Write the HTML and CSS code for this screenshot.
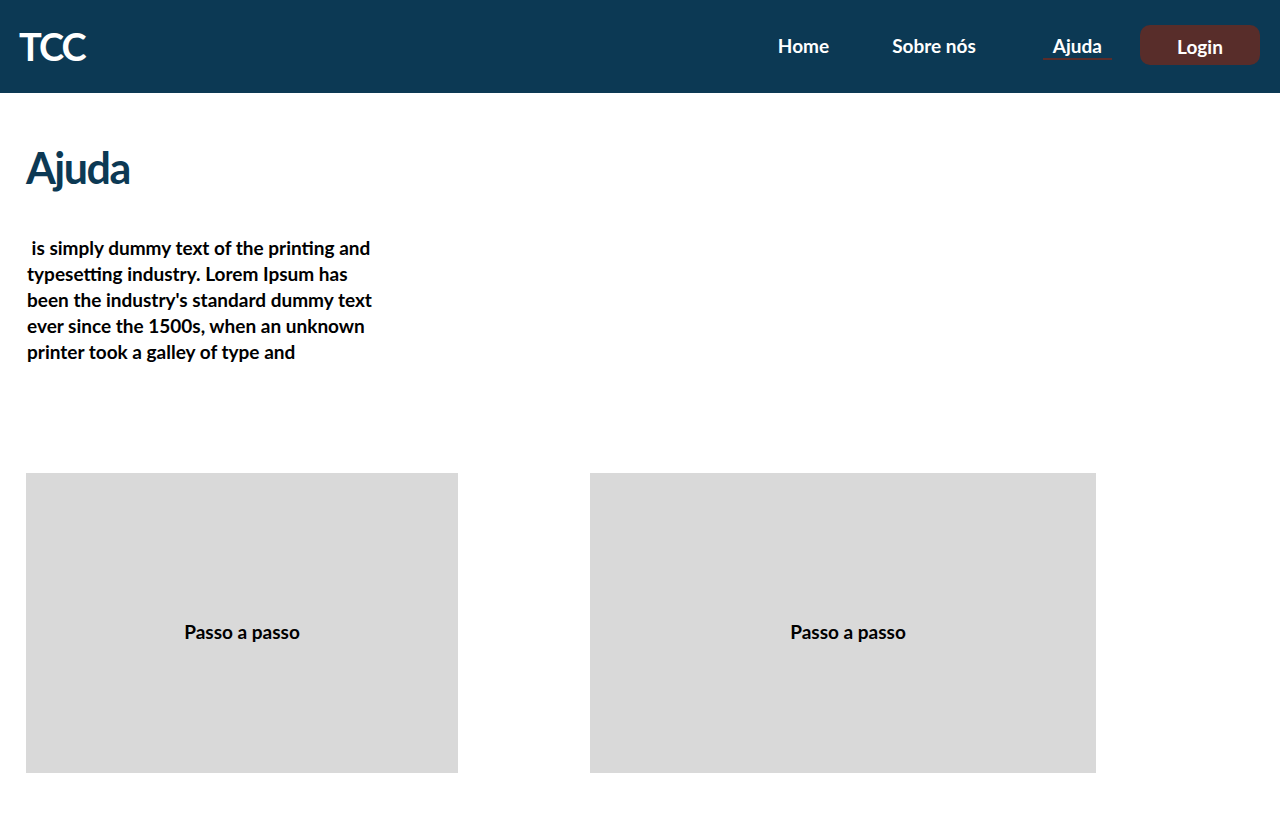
FILE: index.html
```html
<!DOCTYPE html>
<html lang="pt-BR">
<head>
<meta charset="utf-8">
<title>Ajuda - TCC</title>
<link rel="stylesheet" href="styles.css">
</head>
<body>
<header class="topbar">
  <div class="logo">TCC</div>
  <nav class="nav">
    <a class="nav-link nav-home" href="#">Home</a>
    <a class="nav-link nav-sobre" href="#">Sobre nós</a>
    <a class="nav-link nav-ajuda active" href="#">Ajuda</a>
    <a class="login-btn" href="#">Login</a>
  </nav>
</header>
<main class="content">
  <h1 class="title">Ajuda</h1>
  <p class="intro">&nbsp;is simply dummy text of the printing and typesetting industry. Lorem Ipsum has been the industry's standard dummy text ever since the 1500s, when an unknown printer took a galley of type and</p>
  <section class="cards">
    <div class="card card-a">Passo a passo</div>
    <div class="card card-b">Passo a passo</div>
  </section>
</main>
</body>
</html>
```
FILE: styles.css
```css
* { box-sizing: border-box; }
html, body { margin: 0; padding: 0; }
body {
  font-family: "Lato", "Open Sans", sans-serif;
  font-weight: 700;
  background: #ffffff;
  color: #000000;
  width: 1280px;
}
a { text-decoration: none; color: inherit; }

.topbar {
  height: 93px;
  background: #0c3954;
  display: flex;
  align-items: center;
  justify-content: space-between;
  padding: 0 20px 0 19px;
}
.logo {
  color: #ffffff;
  font-size: 38px;
  font-weight: 700;
  letter-spacing: -2px;
  margin-top: -1px;
}
.nav {
  display: flex;
  align-items: center;
}
.nav-link {
  color: #ffffff;
  font-size: 19px;
  padding: 0 10px 0;
  line-height: 24px;
  margin-top: 0;
  border-bottom: 2px solid transparent;
}
.nav-home { margin-right: 43px; }
.nav-sobre { margin-right: 57px; }
.nav-ajuda { margin-right: 28px; }
.nav-link.active { border-bottom-color: #5a2d2b; }
.login-btn {
  width: 120px;
  height: 40px;
  border-radius: 10px;
  background: #582d2a;
  color: #ffffff;
  font-size: 19px;
  display: flex;
  align-items: center;
  justify-content: center;
  padding-top: 3px;
  margin-top: -4px;
}

.content {
  padding: 0 26px;
}
.title {
  margin: 48px 0 0;
  font-size: 43px;
  line-height: 54px;
  color: #0c3954;
  font-weight: 700;
  letter-spacing: -1.5px;
}
.intro {
  margin: 40px 0 0 1px;
  width: 360px;
  font-size: 19px;
  line-height: 26px;
}
.cards {
  display: flex;
  gap: 132px;
  margin-top: 108px;
}
.card {
  height: 300px;
  background: #d9d9d9;
  display: flex;
  align-items: center;
  justify-content: center;
  font-size: 19px;
  padding-top: 16px;
}
.card-a { width: 432px; }
.card-b { width: 506px; padding-left: 10px; }
```
